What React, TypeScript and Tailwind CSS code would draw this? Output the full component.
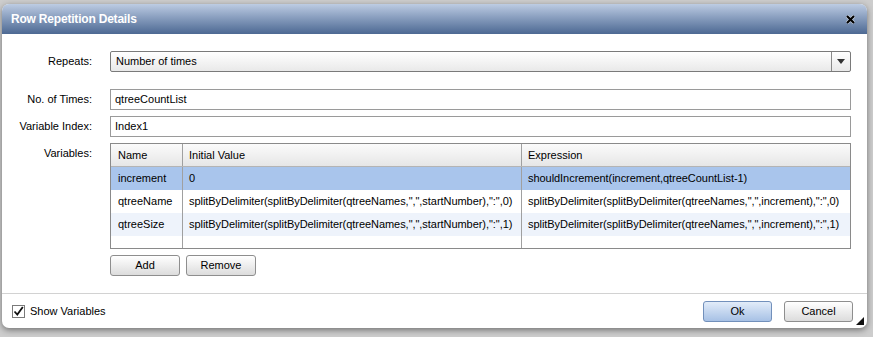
import React from "react";

const rows = [
  {
    name: "increment",
    initial: "0",
    expr: "shouldIncrement(increment,qtreeCountList-1)",
    bg: "bg-[#a9c5ec]",
  },
  {
    name: "qtreeName",
    initial: 'splitByDelimiter(splitByDelimiter(qtreeNames,",",startNumber),":",0)',
    expr: 'splitByDelimiter(splitByDelimiter(qtreeNames,",",increment),":",0)',
    bg: "bg-white",
  },
  {
    name: "qtreeSize",
    initial: 'splitByDelimiter(splitByDelimiter(qtreeNames,",",startNumber),":",1)',
    expr: 'splitByDelimiter(splitByDelimiter(qtreeNames,",",increment),":",1)',
    bg: "bg-[#eef3fb]",
  },
];

function Label({ children, top = false }: { children: React.ReactNode; top?: boolean }) {
  return (
    <div
      className={`w-[90px] shrink-0 text-right ${top ? "pt-[2px]" : "self-center"}`}
    >
      {children}
    </div>
  );
}

function Btn({ children, primary = false, w = "w-[70px]" }: { children: React.ReactNode; primary?: boolean; w?: string }) {
  return (
    <button
      className={`${w} h-[21px] rounded-[3px] border text-[11px] flex items-center justify-center ${
        primary
          ? "border-[#7290bb] bg-gradient-to-b from-[#e2ecf9] to-[#a7c1e5]"
          : "border-[#8e8e8e] bg-gradient-to-b from-white to-[#dcdcdc]"
      }`}
    >
      {children}
    </button>
  );
}

export default function App() {
  return (
    <div className="w-[873px] h-[337px] overflow-hidden bg-[#cdcdcd] pt-[4px] pl-[2px] font-['Liberation_Sans',Arial,sans-serif] text-[11px] text-black">
      <div className="relative w-[865px] h-[324px] bg-white rounded-[7px] overflow-hidden shadow-[0_2px_6px_rgba(0,0,0,0.45)] flex flex-col">
        {/* title bar */}
        <div className="h-[30px] shrink-0 bg-gradient-to-b from-[#bdcce3] to-[#4d6993] flex items-center justify-between pl-[9px] pr-[12px]">
          <span className="text-white font-bold text-[12px] tracking-[-0.2px]">Row Repetition Details</span>
          <svg width="9" height="9" viewBox="0 0 9 9">
            <path d="M1 1 L8 8 M8 1 L1 8" stroke="#fff" strokeWidth="3.4" opacity="0.6" />
            <path d="M1 1 L8 8 M8 1 L1 8" stroke="#000" strokeWidth="2.2" />
          </svg>
        </div>

        {/* body */}
        <div className="flex-1 pt-[17px] pr-[16px] flex flex-col">
          <div className="flex h-[21px]">
            <Label>Repeats:</Label>
            <div className="ml-[18px] flex-1 flex border border-[#7a7a7a] rounded-[2px] bg-gradient-to-b from-white to-[#e9e9e9]">
              <div className="flex-1 flex items-center pl-[5px]">Number of times</div>
              <div className="w-[19px] border-l border-[#8a8a8a] flex items-center justify-center">
                <svg width="8" height="5" viewBox="0 0 8 5">
                  <path d="M0 0 H8 L4 5 Z" fill="#333" />
                </svg>
              </div>
            </div>
          </div>

          <div className="flex h-[21px] mt-[17px]">
            <Label>No. of Times:</Label>
            <div className="ml-[18px] flex-1 flex items-center border border-[#9a9a9a] pl-[4px]">
              qtreeCountList
            </div>
          </div>

          <div className="flex h-[21px] mt-[6px]">
            <Label>Variable Index:</Label>
            <div className="ml-[18px] flex-1 flex items-center border border-[#9a9a9a] pl-[4px]">
              Index1
            </div>
          </div>

          <div className="flex mt-[6px]">
            <Label top>Variables:</Label>
            <div className="ml-[18px] flex-1 flex flex-col">
              <div className="h-[106px] border border-[#8a8a8a] flex flex-col">
                <div className="h-[23px] shrink-0 flex border-b border-[#b4b4b4] bg-gradient-to-b from-[#fbfbfb] to-[#e6e6e6]">
                  <div className="w-[71px] pl-[7px] flex items-center">Name</div>
                  <div className="w-[339px] pl-[6px] flex items-center border-l border-[#a0a0a0]">Initial Value</div>
                  <div className="flex-1 pl-[6px] flex items-center border-l border-[#a0a0a0]">Expression</div>
                </div>
                {rows.map((r) => (
                  <div key={r.name} className={`h-[23px] shrink-0 flex ${r.bg}`}>
                    <div className="w-[71px] pl-[7px] flex items-center">{r.name}</div>
                    <div className="w-[339px] pl-[6px] flex items-center border-l border-[#a0a0a0] whitespace-nowrap overflow-hidden tracking-[-0.05px]">{r.initial}</div>
                    <div className="flex-1 pl-[6px] flex items-center border-l border-[#a0a0a0] whitespace-nowrap overflow-hidden tracking-[-0.05px]">{r.expr}</div>
                  </div>
                ))}
                <div className="flex-1 flex">
                  <div className="w-[71px]" />
                  <div className="w-[339px] border-l border-[#a0a0a0]" />
                  <div className="flex-1 border-l border-[#a0a0a0]" />
                </div>
              </div>
              <div className="flex gap-[6px] mt-[6px]">
                <Btn>Add</Btn>
                <Btn>Remove</Btn>
              </div>
            </div>
          </div>
        </div>

        {/* footer */}
        <div className="h-[35px] shrink-0 border-t border-[#d2d2d2] flex items-center pl-[10px] pr-[14px]">
          <div className="flex items-center gap-[5px]">
            <div className="w-[13px] h-[13px] border border-[#7a7a7a] bg-white flex items-center justify-center">
              <svg width="11" height="11" viewBox="0 0 11 11">
                <path d="M1.5 5.5 L4.3 8.5 L9.8 1" stroke="#111" strokeWidth="1.8" fill="none" />
              </svg>
            </div>
            <span>Show Variables</span>
          </div>
          <div className="ml-auto flex gap-[12px]">
            <Btn primary w="w-[69px]">Ok</Btn>
            <Btn w="w-[69px]">Cancel</Btn>
          </div>
        </div>

        <svg className="absolute right-[3px] bottom-[3px]" width="8" height="8" viewBox="0 0 8 8">
          <path d="M8 0 V8 H0 Z" fill="#111" />
        </svg>
      </div>
    </div>
  );
}
